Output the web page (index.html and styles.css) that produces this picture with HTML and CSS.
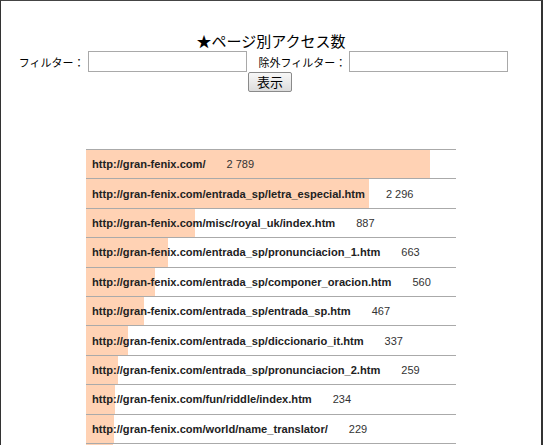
FILE: index.html
```html
<!DOCTYPE html>
<html lang="ja">
<head>
<meta charset="utf-8">
<title>ページ別アクセス数</title>
<link rel="stylesheet" href="styles.css">
</head>
<body>
<div class="page">
  <h1 class="title">★ページ別アクセス数</h1>
  <form class="filters">
    <div class="filter-row">
      <label class="lbl">フィルター：</label><input class="field" type="text">
      <label class="lbl lbl-ex">除外フィルター：</label><input class="field" type="text">
    </div>
    <div class="btn-row"><button class="btn" type="button">表示</button></div>
  </form>
  <div class="ranking">
    <div class="row" style="--w:344px"><span class="url">http://gran-fenix.com/</span><span class="num">2 789</span></div>
    <div class="row" style="--w:283px"><span class="url">http://gran-fenix.com/entrada_sp/letra_especial.htm</span><span class="num">2 296</span></div>
    <div class="row" style="--w:109.4px"><span class="url">http://gran-fenix.com/misc/royal_uk/index.htm</span><span class="num">887</span></div>
    <div class="row" style="--w:81.8px"><span class="url">http://gran-fenix.com/entrada_sp/pronunciacion_1.htm</span><span class="num">663</span></div>
    <div class="row" style="--w:69.1px"><span class="url">http://gran-fenix.com/entrada_sp/componer_oracion.htm</span><span class="num">560</span></div>
    <div class="row" style="--w:57.6px"><span class="url">http://gran-fenix.com/entrada_sp/entrada_sp.htm</span><span class="num">467</span></div>
    <div class="row" style="--w:41.6px"><span class="url">http://gran-fenix.com/entrada_sp/diccionario_it.htm</span><span class="num">337</span></div>
    <div class="row" style="--w:31.9px"><span class="url">http://gran-fenix.com/entrada_sp/pronunciacion_2.htm</span><span class="num">259</span></div>
    <div class="row" style="--w:28.9px"><span class="url">http://gran-fenix.com/fun/riddle/index.htm</span><span class="num">234</span></div>
    <div class="row" style="--w:28.2px"><span class="url">http://gran-fenix.com/world/name_translator/</span><span class="num">229</span></div>
    <div class="row" style="--w:27.4px"><span class="url">http://gran-fenix.com/entrada_sp/verbo_it.htm</span><span class="num">222</span></div>
  </div>
</div>
</body>
</html>
```

FILE: styles.css
```css
html {
  height: 100%;
  border-top: 1px solid #444;
  border-left: 1px solid #333;
  border-right: 2px solid #333;
  box-sizing: border-box;
  background: #fff;
}
body {
  margin: 0;
  font-family: "Liberation Sans", Arial, "Noto Sans CJK JP", sans-serif;
  color: #000;
}
.page {
  padding-top: 30px;
}
.title {
  margin: 0;
  text-align: center;
  font-family: "Noto Sans CJK JP", sans-serif;
  font-weight: normal;
  font-size: 15px;
  line-height: 20px;
}
.filters {
  margin: 0;
}
.filter-row {
  display: flex;
  justify-content: center;
  align-items: center;
  padding-right: 15px;
  height: 21px;
}
.lbl {
  font-family: "Noto Sans CJK JP", sans-serif;
  font-size: 11px;
  margin-right: 3px;
}
.lbl-ex {
  margin-left: 12px;
  margin-right: 3px;
}
.field {
  box-sizing: border-box;
  width: 159px;
  height: 21px;
  border: 1px solid #a9a9a9;
  padding: 0 2px;
  margin: 0;
  background: #fff;
}
.btn-row {
  display: flex;
  justify-content: center;
  padding-top: 0;
  padding-right: 2px;
}
.btn {
  box-sizing: border-box;
  height: 20px;
  width: 44px;
  padding: 0;
  margin: 0;
  font-family: "Noto Sans CJK JP", sans-serif;
  font-size: 13px;
  line-height: 18px;
  color: #000;
  border: 1px solid #8a8a8a;
  border-radius: 2px;
  background: linear-gradient(#f8f8f8, #dcdcdc);
}
.ranking {
  width: 370px;
  margin: 57px auto 0;
}
.row {
  border-top: 1px solid #aaa;
  height: 28.4px;
  display: flex;
  align-items: center;
  padding-left: 6px;
  font-size: 11px;
  background: linear-gradient(to right, #ffd2b4 var(--w), transparent var(--w)) no-repeat;
}
.url {
  font-weight: bold;
  font-size: 11.12px;
  color: #222;
}
.num {
  margin-left: 21px;
  color: #333;
}
```
